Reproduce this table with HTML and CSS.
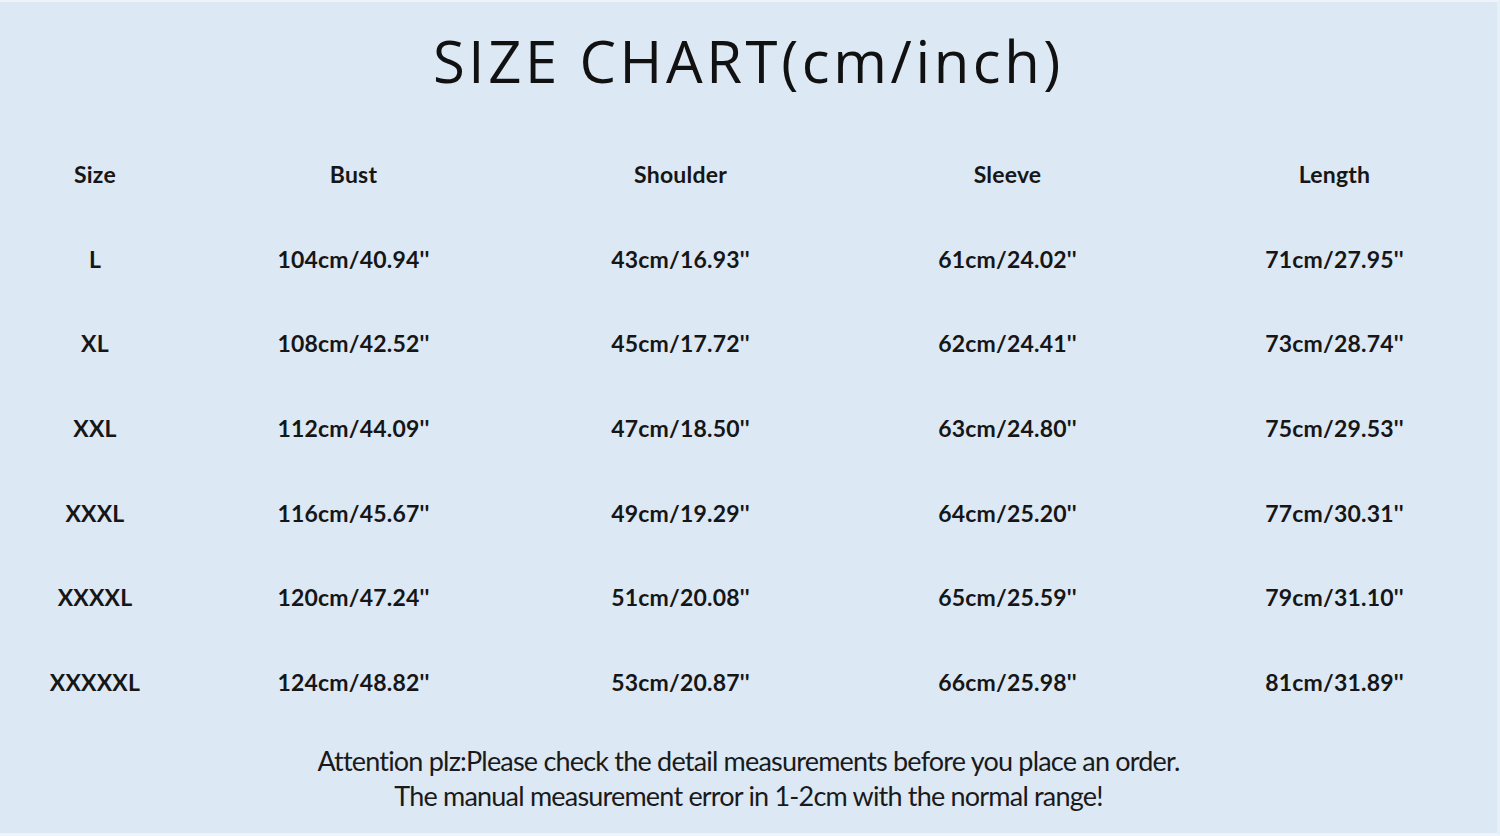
FILE: index.html
```html
<!DOCTYPE html>
<html lang="en">
<head>
<meta charset="utf-8">
<title>Size Chart</title>
<link rel="stylesheet" href="styles.css">
</head>
<body>
<main class="chart">
  <h1 class="title">SIZE CHART(cm/inch)</h1>
  <div class="table">
    <div class="cell head">Size</div>
    <div class="cell head">Bust</div>
    <div class="cell head">Shoulder</div>
    <div class="cell head">Sleeve</div>
    <div class="cell head">Length</div>

    <div class="cell">L</div>
    <div class="cell">104cm/40.94''</div>
    <div class="cell">43cm/16.93''</div>
    <div class="cell">61cm/24.02''</div>
    <div class="cell">71cm/27.95''</div>

    <div class="cell">XL</div>
    <div class="cell">108cm/42.52''</div>
    <div class="cell">45cm/17.72''</div>
    <div class="cell">62cm/24.41''</div>
    <div class="cell">73cm/28.74''</div>

    <div class="cell">XXL</div>
    <div class="cell">112cm/44.09''</div>
    <div class="cell">47cm/18.50''</div>
    <div class="cell">63cm/24.80''</div>
    <div class="cell">75cm/29.53''</div>

    <div class="cell">XXXL</div>
    <div class="cell">116cm/45.67''</div>
    <div class="cell">49cm/19.29''</div>
    <div class="cell">64cm/25.20''</div>
    <div class="cell">77cm/30.31''</div>

    <div class="cell">XXXXL</div>
    <div class="cell">120cm/47.24''</div>
    <div class="cell">51cm/20.08''</div>
    <div class="cell">65cm/25.59''</div>
    <div class="cell">79cm/31.10''</div>

    <div class="cell">XXXXXL</div>
    <div class="cell">124cm/48.82''</div>
    <div class="cell">53cm/20.87''</div>
    <div class="cell">66cm/25.98''</div>
    <div class="cell">81cm/31.89''</div>
  </div>
  <div class="note">
    <p>Attention plz:Please check the detail measurements before you place an order.</p>
    <p>The manual measurement error in 1-2cm with the normal range!</p>
  </div>
</main>
</body>
</html>
```

FILE: styles.css
```css
* { box-sizing: border-box; }
html, body { margin: 0; padding: 0; }
body {
  width: 1500px;
  height: 836px;
  background: #eaf2fa;
  overflow: hidden;
}
.chart {
  width: 1500px;
  height: 836px;
  background: #dce8f4;
  border-top: 2px solid #eef4fa;
  border-bottom: 3px solid #eef4fa;
  border-right: 3px solid #e6f0f8;
  color: #161616;
  display: flex;
  flex-direction: column;
}
.title {
  margin: 0;
  height: 122px;
  padding-top: 20px;
  text-align: center;
  font-family: "Open Sans", "DejaVu Sans", sans-serif;
  font-weight: 400;
  font-size: 58px;
  line-height: 78px;
  letter-spacing: 3.6px;
  color: #111;
}
.table {
  display: grid;
  grid-template-columns: 190px repeat(4, 327px);
  grid-auto-rows: 84.6px;
  margin-top: 8px;
  font-family: "Lato", "Noto Sans", sans-serif;
  font-weight: 700;
  font-size: 23px;
  letter-spacing: 0.2px;
}
.cell {
  display: flex;
  align-items: center;
  justify-content: center;
}
.note {
  margin-top: 19px;
  text-align: center;
  font-family: "Lato", "Noto Sans", sans-serif;
  font-weight: 400;
  font-size: 27px;
  line-height: 35px;
  letter-spacing: -0.8px;
  color: #1a1a1a;
}
.note p { margin: 0; }
```
